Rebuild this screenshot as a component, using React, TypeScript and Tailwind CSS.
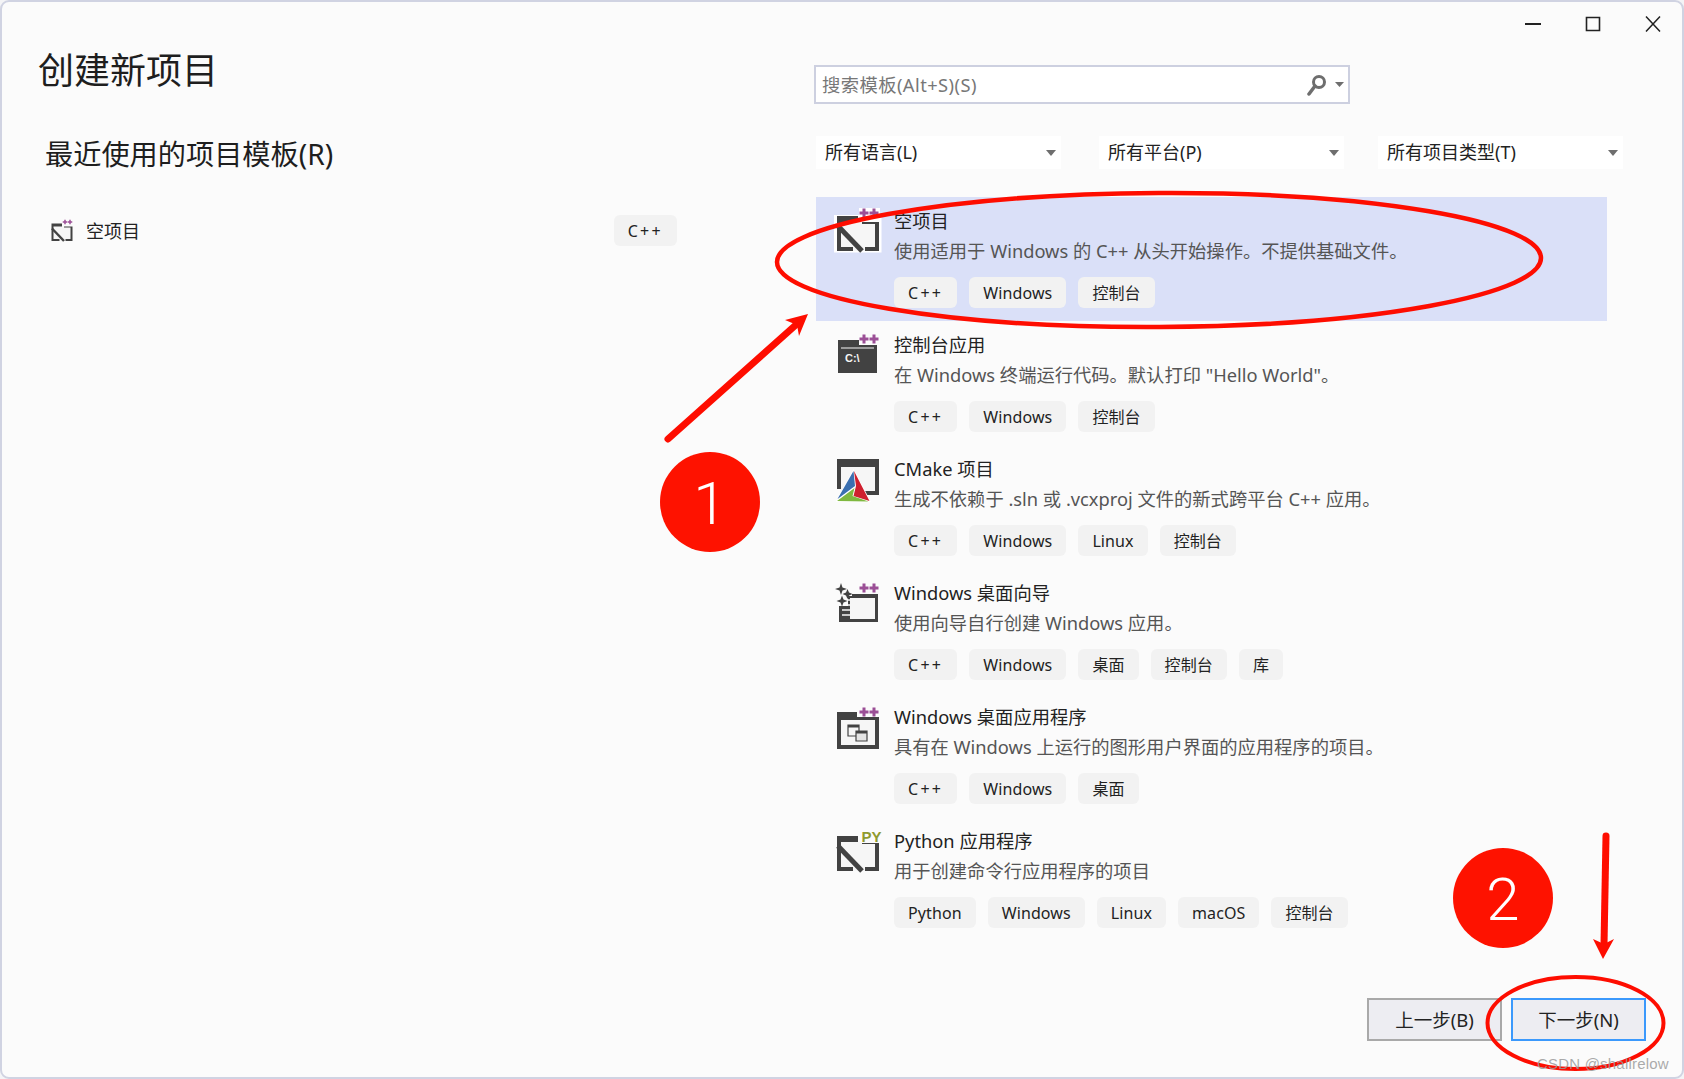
const FONT = "font-['Noto_Sans','Noto_Sans_CJK_SC',sans-serif]";

const Plus = ({ x, y }: { x: number; y: number }) => (
  <path d={`M${x - 4.5} ${y}H${x + 4.5}M${x} ${y - 4.5}V${y + 4.5}`} stroke="#9b4f96" strokeWidth="3" fill="none" />
);

function BlankShape() {
  return (
    <>
      <path d="M4 15H45V44H4Z" fill="#f6f6f6" />
      <path d="M3 9H24V15H7V40H19V44H3Z" fill="#424242" />
      <path d="M28 15H45V44H31V40H41V17H28Z" fill="#424242" />
      <path d="M4 19L28 44" stroke="#424242" strokeWidth="5" fill="none" />
    </>
  );
}

function BlankIcon({ halo }: { halo?: boolean }) {
  return (
    <svg width="48" height="48" viewBox="0 0 48 48">
      {halo && <path d="M0 8H25V1H46V8H47.5V45.5H0Z" fill="#fff" />}
      <BlankShape />
      <Plus x={30} y={6} />
      <Plus x={40} y={6} />
    </svg>
  );
}

function ConsoleIcon() {
  return (
    <svg width="48" height="48" viewBox="0 0 48 48">
      <path d="M4 9H25V14H43V42H4Z" fill="#424242" />
      <path d="M7 17H40" stroke="#f6f6f6" strokeWidth="1" />
      <text x="11" y="31" fontSize="11" fontWeight="700" fill="#f6f6f6" fontFamily="Liberation Sans, sans-serif">C:\</text>
      <Plus x={30} y={8} />
      <Plus x={40} y={8} />
    </svg>
  );
}

function CMakeIcon() {
  return (
    <svg width="48" height="48" viewBox="0 0 48 48">
      <path d="M3 4H45V40H30V36H41V12H7V34H3Z" fill="#424242" />
      <path d="M7 12H41V36H7Z" fill="#f6f6f6" />
      <path d="M19.5 14L1.5 47H37Z" fill="#fff" />
      <path d="M19.5 16L3.5 44L21 31Z" fill="#3a6fb0" />
      <path d="M20 16L35.5 46L19.5 41L22 31Z" fill="#cf1f2e" />
      <path d="M3 46L20.5 33L18.5 41L34.5 46.5Z" fill="#7fb83f" />
    </svg>
  );
}

function Sparkle({ x, y, r }: { x: number; y: number; r: number }) {
  return <path d={`M${x} ${y - r}L${x + 1.5} ${y - 1.5}L${x + r} ${y}L${x + 1.5} ${y + 1.5}L${x} ${y + r}L${x - 1.5} ${y + 1.5}L${x - r} ${y}L${x - 1.5} ${y - 1.5}Z`} fill="#424242" />;
}

function WizardIcon() {
  return (
    <svg width="48" height="48" viewBox="0 0 48 48">
      <path d="M5 15H44V43H5Z" fill="#424242" />
      <path d="M16 19H41V40H16Z" fill="#f6f6f6" />
      <path d="M8 21H16M8 26H16M8 31H16M8 36H16" stroke="#f6f6f6" strokeWidth="1.6" fill="none" />
      <path d="M2 4H14V14H18V17H14V27H2Z" fill="#fbfbfb" />
      <Sparkle x={7} y={10} r={6} />
      <Sparkle x={13.5} y={15} r={5} />
      <Sparkle x={8} y={22} r={5.5} />
      <Plus x={30} y={9} />
      <Plus x={40} y={9} />
    </svg>
  );
}

function DesktopIcon() {
  return (
    <svg width="48" height="48" viewBox="0 0 48 48">
      <path d="M3 9H23V14H45V46H3Z" fill="#424242" />
      <path d="M7 17H41V42H7Z" fill="#f6f6f6" />
      <path d="M14 22H25V33H14Z" fill="#f6f6f6" stroke="#424242" strokeWidth="1.2" />
      <path d="M14 22H25V24.5H14Z" fill="#424242" />
      <path d="M22 28H33V38H22Z" fill="#e4e4e4" stroke="#424242" strokeWidth="1.2" />
      <path d="M22 28H33V30.5H22Z" fill="#424242" />
      <Plus x={30} y={9} />
      <Plus x={40} y={9} />
    </svg>
  );
}

function PythonIcon() {
  return (
    <svg width="48" height="48" viewBox="0 0 48 48">
      <BlankShape />
      <path d="M26 2H46V16H26Z" fill="#fbfbfb" />
      <text x="27.5" y="14.5" fontSize="15" fontWeight="700" fill="#8f9a2e" fontFamily="Liberation Sans, sans-serif">PY</text>
    </svg>
  );
}

function Tag({ label, spaced }: { label: string; spaced?: boolean }) {
  return (
    <span className={`flex h-[31px] items-center rounded-[6px] bg-[#f2f2f2] px-[14px] text-[16px] text-[#222] ${spaced ? "tracking-[2.3px]" : "tracking-[0.1px]"}`}>
      {label}
    </span>
  );
}

const rows = [
  { icon: <BlankIcon halo />, name: "空项目", desc: "使用适用于 Windows 的 C++ 从头开始操作。不提供基础文件。", tags: ["C++", "Windows", "控制台"], selected: true },
  { icon: <ConsoleIcon />, name: "控制台应用", desc: "在 Windows 终端运行代码。默认打印 \"Hello World\"。", tags: ["C++", "Windows", "控制台"] },
  { icon: <CMakeIcon />, name: "CMake 项目", desc: "生成不依赖于 .sln 或 .vcxproj 文件的新式跨平台 C++ 应用。", tags: ["C++", "Windows", "Linux", "控制台"] },
  { icon: <WizardIcon />, name: "Windows 桌面向导", desc: "使用向导自行创建 Windows 应用。", tags: ["C++", "Windows", "桌面", "控制台", "库"] },
  { icon: <DesktopIcon />, name: "Windows 桌面应用程序", desc: "具有在 Windows 上运行的图形用户界面的应用程序的项目。", tags: ["C++", "Windows", "桌面"] },
  { icon: <PythonIcon />, name: "Python 应用程序", desc: "用于创建命令行应用程序的项目", tags: ["Python", "Windows", "Linux", "macOS", "控制台"] },
];

function Filter({ label, className }: { label: string; className: string }) {
  return (
    <div className={`flex h-[33px] items-center justify-between bg-white pl-[9px] pr-[5px] text-[18px] text-[#222] ${className}`}>
      <span>{label}</span>
      <svg width="10" height="6" viewBox="0 0 10 6"><path d="M0 0H10L5 6Z" fill="#6e6e6e" /></svg>
    </div>
  );
}

function Annotations() {
  const digit = "Roboto, Liberation Sans, sans-serif";
  return (
    <svg className="pointer-events-none absolute left-0 top-0" width="1684" height="1079" viewBox="0 0 1684 1079">
      <ellipse cx="1159" cy="260" rx="382" ry="67" fill="none" stroke="#fe0d00" strokeWidth="4.5" transform="rotate(-0.3 1159 260)" />
      <path d="M668 439L798 323" stroke="#fe0d00" strokeWidth="7" strokeLinecap="round" />
      <path d="M808 314L785 320L797 325L799 336Z" fill="#fe0d00" />
      <circle cx="710" cy="502" r="50" fill="#fe1200" />
      <text x="710" y="524" textAnchor="middle" fontSize="60" fontWeight="300" fill="#fff" fontFamily={digit}>1</text>
      <path d="M1606 836L1604 945" stroke="#fe0d00" strokeWidth="7" strokeLinecap="round" />
      <path d="M1603 959L1593 939L1604 944L1614 939Z" fill="#fe0d00" />
      <circle cx="1503" cy="898" r="50" fill="#fe1200" />
      <text x="1503" y="920" textAnchor="middle" fontSize="60" fontWeight="300" fill="#fff" fontFamily={digit}>2</text>
      <ellipse cx="1575.5" cy="1023" rx="88" ry="46" fill="none" stroke="#fe0d00" strokeWidth="4" />
      <text x="1537" y="1069" fontSize="15" letterSpacing="0.2" fill="#9a9a9a" fillOpacity="0.85" fontFamily="Liberation Sans, sans-serif">CSDN @shallrelow</text>
    </svg>
  );
}

export default function App() {
  return (
    <div className={`relative h-[1079px] w-[1684px] overflow-hidden bg-[#f4f4f6] ${FONT}`}>
      <div className="flex h-full w-full rounded-[9px] border-2 border-[#d0d3e2] bg-[#fbfbfb]">
        <aside className="w-[812px] shrink-0 pl-[36px]">
          <h1 className="mt-[44px] h-[50px] text-[36px] leading-[50px] font-normal text-[#1e1e1e]">创建新项目</h1>
          <h2 className="ml-[7px] mt-[38px] h-[40px] text-[28.2px] leading-[40px] font-normal text-[#1e1e1e]">最近使用的项目模板(R)</h2>
          <div className="ml-[12px] mt-[41px] flex h-[31px] w-[627px] items-center">
            <svg width="24" height="24" viewBox="0 0 48 48"><BlankShape /><Plus x={30} y={6} /><Plus x={40} y={6} /></svg>
            <span className="ml-[12px] mt-[2px] text-[18px] text-[#222]">空项目</span>
            <span className="ml-auto"><Tag label="C++" spaced /></span>
          </div>
        </aside>
        <main className="flex min-w-0 flex-1 flex-col">
          <div className="flex h-[30px] items-center justify-end gap-[44px] pr-[21px] pt-[14px]">
            <svg width="16" height="16" viewBox="0 0 16 16"><path d="M0 8H16" stroke="#222" strokeWidth="2" /></svg>
            <svg width="16" height="16" viewBox="0 0 16 16"><path d="M1.5 1.5H14.5V14.5H1.5Z" fill="none" stroke="#222" strokeWidth="1.6" /></svg>
            <svg width="16" height="16" viewBox="0 0 16 16"><path d="M1 0.5L15 15.5M15 0.5L1 15.5" stroke="#222" strokeWidth="1.5" /></svg>
          </div>
          <div className="mt-[33px] flex h-[39px] w-[536px] items-center border-2 border-[#cdd0e0] bg-white pl-[6px] pr-[4px] text-[18.3px] tracking-[0.45px] text-[#777]">
            <span className="pt-[1px]">搜索模板(Alt+S)(S)</span>
            <svg className="ml-auto" width="22" height="22" viewBox="0 0 22 22">
              <circle cx="13" cy="8" r="5.5" fill="none" stroke="#6e6e6e" strokeWidth="3" />
              <path d="M9 12L3 20" stroke="#6e6e6e" strokeWidth="3.5" strokeLinecap="round" />
            </svg>
            <svg className="ml-[7px]" width="9" height="5" viewBox="0 0 9 5"><path d="M0 0H9L4.5 5Z" fill="#6e6e6e" /></svg>
          </div>
          <div className="mt-[32px] flex pl-[2px]">
            <Filter label="所有语言(L)" className="w-[245px]" />
            <Filter label="所有平台(P)" className="ml-[38px] w-[245px]" />
            <Filter label="所有项目类型(T)" className="ml-[34px] w-[245px]" />
          </div>
          <div className="mt-[28px] flex w-[793px] flex-col pl-[2px]">
            {rows.map((r) => (
              <div key={r.name} className={`flex h-[124px] w-[791px] pl-[18px] pt-[10px] ${r.selected ? "bg-[#dae0f8]" : ""}`}>
                <div className="h-12 w-12 shrink-0">{r.icon}</div>
                <div className="ml-[12px] min-w-0 pt-[1px]">
                  <div className="text-[18.3px] leading-[26px] text-[#222]">{r.name}</div>
                  <div className="mt-[4px] text-[18.3px] leading-[26px] text-[#555]">{r.desc}</div>
                  <div className="mt-[13px] flex gap-[12px]">
                    {r.tags.map((t) => (
                      <Tag key={t} label={t} spaced={t === "C++"} />
                    ))}
                  </div>
                </div>
              </div>
            ))}
          </div>
          <div className="mt-auto flex justify-end gap-[9px] pb-[36px] pr-[36px]">
            <button className="h-[43px] w-[135px] border-2 border-[#a9a9a9] bg-[#ededf2] pt-[1px] text-[18.5px] text-[#222]">上一步(B)</button>
            <button className="h-[43px] w-[135px] border-2 border-[#3b99fc] bg-[#ededf2] pt-[1px] text-[18.5px] text-[#222]">下一步(N)</button>
          </div>
        </main>
      </div>
      <Annotations />
    </div>
  );
}
